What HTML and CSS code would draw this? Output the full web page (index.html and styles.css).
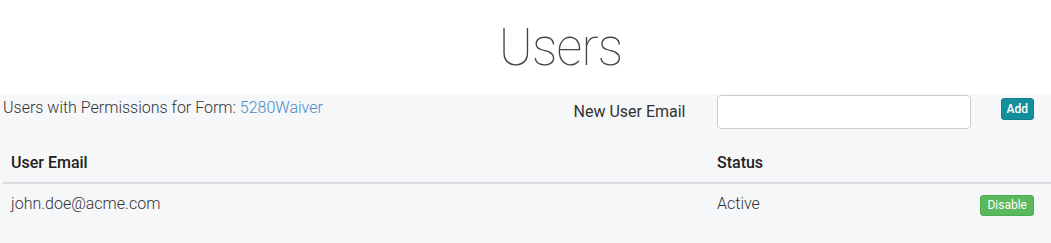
FILE: index.html
```html
<!DOCTYPE html>
<html lang="en">
<head>
    <meta charset="UTF-8">
    <title>Users</title>
    <link rel="stylesheet" href="styles.css">
</head>
<body>

    <!-- Page title -->
    <div class="page-header">
        <h1>Users</h1>
    </div>

    <!-- Permissions panel -->
    <div class="panel">
        <div class="panel-top">
            <div class="form-info">Users with Permissions for Form: <a href="#">5280Waiver</a></div>
            <div class="add-user">
                <label for="newEmail">New User Email</label>
                <input type="text" id="newEmail">
                <button class="btn btn-add">Add</button>
            </div>
        </div>

        <table class="user-table">
            <thead>
                <tr>
                    <th class="col-email">User Email</th>
                    <th class="col-status">Status</th>
                    <th class="col-action"></th>
                </tr>
            </thead>
            <tbody>
                <tr>
                    <td>john.doe@acme.com</td>
                    <td>Active</td>
                    <td class="col-action"><button class="btn btn-disable">Disable</button></td>
                </tr>
            </tbody>
        </table>
    </div>

</body>
</html>
```

FILE: styles.css
```css
body {
    font-family: Roboto, "Liberation Sans", sans-serif;
    background-color: #f6f7f9;
    color: #333;
    margin: 0;
    padding: 0;
}

/* Title */
.page-header {
    background-color: #fff;
    height: 94px;
    display: flex;
    justify-content: center;
    align-items: flex-start;
    padding-left: 70px;
}

.page-header h1 {
    margin: 13px 0 0 0;
    font-size: 51px;
    font-weight: 100;
    line-height: 70px;
    letter-spacing: -0.8px;
    color: #444;
}

/* Panel */
.panel {
    padding: 0 0 0 3px;
}

.panel-top {
    display: flex;
    justify-content: space-between;
    align-items: flex-start;
    height: 46px;
}

.form-info {
    margin-top: 2px;
    font-size: 16px;
    font-weight: 300;
    line-height: 24px;
}

.form-info a {
    color: #4a89c8;
    text-decoration: none;
}

.add-user {
    display: flex;
    align-items: flex-start;
    margin-top: 1px;
}

.add-user label {
    font-size: 16px;
    line-height: 34px;
    margin-right: 31px;
}

.add-user input {
    width: 252px;
    height: 32px;
    padding: 0;
    border: 1px solid #ccc;
    border-radius: 4px;
    background: #fff;
}

.btn {
    font-family: Roboto, "Liberation Sans", sans-serif;
    font-size: 12px;
    font-weight: 500;
    color: #fff;
    border: 1px solid transparent;
    border-radius: 3px;
    cursor: pointer;
}

.btn-add {
    margin: 3px 17px 0 30px;
    height: 22px;
    padding: 0 5px;
    background-color: #138f9e;
    border-color: #11808e;
}

.btn-disable {
    height: 21px;
    padding: 0 6px;
    font-weight: 400;
    background-color: #5cb85c;
    border-color: #4cae4c;
}

/* Table */
.user-table {
    width: 100%;
    border-collapse: collapse;
}

.user-table th, .user-table td {
    text-align: left;
    padding: 8px 8px;
    font-size: 16px;
    line-height: 24px;
}

.user-table th {
    font-weight: 500;
    color: #222;
    padding: 11px 8px 7px 8px;
    border-bottom: 2px solid #dcdde0;
}

.user-table td {
    font-weight: 300;
}

.col-email {
    width: 690px;
}

.col-status {
    width: 240px;
}

.user-table .col-action {
    text-align: right;
    padding-right: 17px;
}
```
